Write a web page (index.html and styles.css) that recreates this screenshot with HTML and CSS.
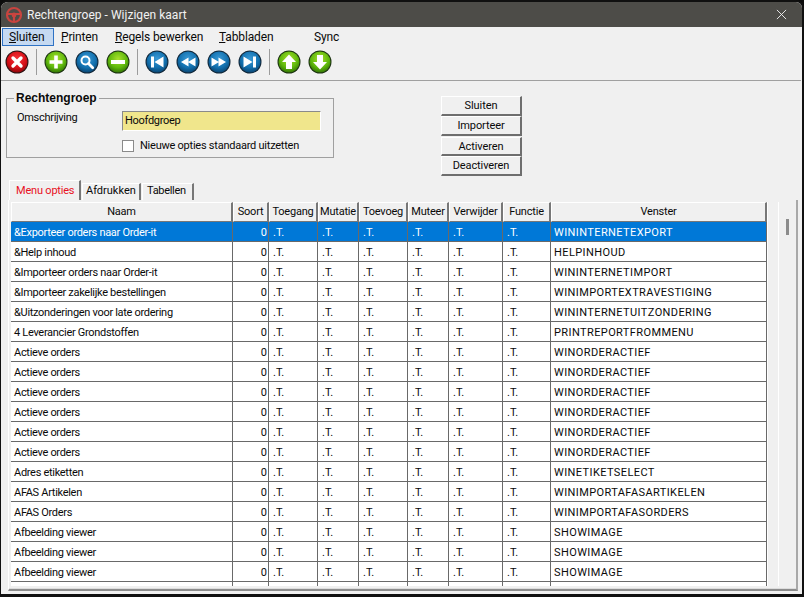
FILE: index.html
```html
<!DOCTYPE html>
<html lang="nl">
<head>
<meta charset="utf-8">
<title>Rechtengroep - Wijzigen kaart</title>
<link rel="stylesheet" href="styles.css">
</head>
<body>
<svg class="defs" aria-hidden="true">
  <defs>
    <radialGradient id="gRed" cx="50%" cy="35%" r="70%"><stop offset="0" stop-color="#f4343a"/><stop offset=".6" stop-color="#d80f17"/><stop offset="1" stop-color="#7c0508"/></radialGradient>
    <radialGradient id="gGreen" cx="50%" cy="35%" r="70%"><stop offset="0" stop-color="#a8e02c"/><stop offset=".6" stop-color="#5fb80c"/><stop offset="1" stop-color="#2c6a04"/></radialGradient>
    <radialGradient id="gBlue" cx="50%" cy="35%" r="70%"><stop offset="0" stop-color="#3a9ad6"/><stop offset=".6" stop-color="#1270ae"/><stop offset="1" stop-color="#0a3f68"/></radialGradient>
    <symbol id="disc-red" viewBox="0 0 24 24"><circle cx="12" cy="12" r="11.5" fill="#2a1414"/><circle cx="12" cy="12" r="10.5" fill="url(#gRed)"/></symbol>
    <symbol id="disc-green" viewBox="0 0 24 24"><circle cx="12" cy="12" r="11.5" fill="#1d3312"/><circle cx="12" cy="12" r="10.5" fill="url(#gGreen)"/></symbol>
    <symbol id="disc-blue" viewBox="0 0 24 24"><circle cx="12" cy="12" r="11.5" fill="#12283a"/><circle cx="12" cy="12" r="10.5" fill="url(#gBlue)"/></symbol>
  </defs>
</svg>
<div class="window">
  <header class="titlebar">
    <svg class="logo" viewBox="0 0 18 18"><circle cx="9" cy="9" r="7" fill="none" stroke="#c8443f" stroke-width="2.2"/><path d="M2.500 8h13M9 8v8" stroke="#c8443f" stroke-width="2.200" fill="none"/><circle cx="9" cy="9" r="2.400" fill="#c8443f"/></svg>
    <span class="title">Rechtengroep - Wijzigen kaart</span>
    <svg class="close" viewBox="0 0 12 12"><path d="M1 1l10 10M11 1L1 11" stroke="#f2f2f2" stroke-width="1" fill="none"/></svg>
  </header>
  <nav class="menubar">
    <span class="menu-item active"><u>S</u>luiten</span>
    <span class="menu-item printen"><u>P</u>rinten</span>
    <span class="menu-item regels"><u>R</u>egels bewerken</span>
    <span class="menu-item tabs-menu"><u>T</u>abbladen</span>
    <span class="menu-item">Sync</span>
  </nav>
  <div class="toolbar">
    <svg class="tool" viewBox="0 0 24 24"><use href="#disc-red"/><path d="M8 8l8 8M16 8l-8 8" stroke="#fff" stroke-width="3.400" stroke-linecap="round"/></svg>
    <i class="sep"></i>
    <svg class="tool" viewBox="0 0 24 24"><use href="#disc-green"/><path d="M12 5.500v13M5.500 12h13" stroke="#fff" stroke-width="3.600"/></svg>
    <svg class="tool" viewBox="0 0 24 24"><use href="#disc-blue"/><circle cx="10.500" cy="10.500" r="4" fill="none" stroke="#fff" stroke-width="2"/><path d="M13.500 13.500l4.200 4.200" stroke="#fff" stroke-width="2.800" stroke-linecap="round"/></svg>
    <svg class="tool" viewBox="0 0 24 24"><use href="#disc-green"/><path d="M5 12h14" stroke="#fff" stroke-width="3.800"/></svg>
    <i class="sep"></i>
    <svg class="tool" viewBox="0 0 24 24"><use href="#disc-blue"/><path d="M6 6.500h3v11H6zM18.500 6.500v11L9.500 12z" fill="#fff"/></svg>
    <svg class="tool" viewBox="0 0 24 24"><use href="#disc-blue"/><path d="M12.500 7.500v9L5 12zM19.500 7.500v9L12 12z" fill="#fff"/></svg>
    <svg class="tool" viewBox="0 0 24 24"><use href="#disc-blue"/><path d="M4.500 7.500v9L12 12zM11.500 7.500v9L19 12z" fill="#fff"/></svg>
    <svg class="tool" viewBox="0 0 24 24"><use href="#disc-blue"/><path d="M18 6.500h-3v11h3zM5.500 6.500v11l9-5.500z" fill="#fff"/></svg>
    <i class="sep"></i>
    <svg class="tool" viewBox="0 0 24 24"><use href="#disc-green"/><path d="M12 4.500l7 7.500H15v7H9v-7H5z" fill="#fff"/></svg>
    <svg class="tool" viewBox="0 0 24 24"><use href="#disc-green"/><path d="M12 19.500L19 12H15V5H9v7H5z" fill="#fff"/></svg>
  </div>
  <main class="content">
    <section class="top">
      <fieldset class="group">
        <legend>Rechtengroep</legend>
        <div class="field">
          <label class="field-label">Omschrijving</label>
          <div class="input">Hoofdgroep</div>
        </div>
        <div class="check-row">
          <span class="checkbox"></span>
          <span class="check-label">Nieuwe opties standaard uitzetten</span>
        </div>
      </fieldset>
      <div class="buttons">
        <button class="btn">Sluiten</button>
        <button class="btn">Importeer</button>
        <button class="btn">Activeren</button>
        <button class="btn">Deactiveren</button>
      </div>
    </section>
    <div class="tabs">
      <span class="tab selected">Menu opties</span>
      <span class="tab t-afdrukken">Afdrukken</span>
      <span class="tab t-tabellen">Tabellen</span>
    </div>
    <section class="panel">
      <div class="grid-wrap">
        <table class="grid">
          <colgroup>
            <col class="c-naam"><col class="c-soort"><col class="c-toegang"><col class="c-mutatie"><col class="c-toevoeg"><col class="c-muteer"><col class="c-verwijder"><col class="c-functie"><col class="c-venster">
          </colgroup>
          <thead>
            <tr><th>Naam</th><th>Soort</th><th>Toegang</th><th>Mutatie</th><th>Toevoeg</th><th>Muteer</th><th>Verwijder</th><th>Functie</th><th>Venster</th></tr>
          </thead>
          <tbody>
            <tr class="current"><td>&amp;Exporteer orders naar Order-it</td><td class="num">0</td><td>.T.</td><td>.T.</td><td>.T.</td><td>.T.</td><td>.T.</td><td>.T.</td><td>WININTERNETEXPORT</td></tr>
            <tr><td>&amp;Help inhoud</td><td class="num">0</td><td>.T.</td><td>.T.</td><td>.T.</td><td>.T.</td><td>.T.</td><td>.T.</td><td>HELPINHOUD</td></tr>
            <tr><td>&amp;Importeer orders naar Order-it</td><td class="num">0</td><td>.T.</td><td>.T.</td><td>.T.</td><td>.T.</td><td>.T.</td><td>.T.</td><td>WININTERNETIMPORT</td></tr>
            <tr><td>&amp;Importeer zakelijke bestellingen</td><td class="num">0</td><td>.T.</td><td>.T.</td><td>.T.</td><td>.T.</td><td>.T.</td><td>.T.</td><td>WINIMPORTEXTRAVESTIGING</td></tr>
            <tr><td>&amp;Uitzonderingen voor late ordering</td><td class="num">0</td><td>.T.</td><td>.T.</td><td>.T.</td><td>.T.</td><td>.T.</td><td>.T.</td><td>WININTERNETUITZONDERING</td></tr>
            <tr><td>4 Leverancier Grondstoffen</td><td class="num">0</td><td>.T.</td><td>.T.</td><td>.T.</td><td>.T.</td><td>.T.</td><td>.T.</td><td>PRINTREPORTFROMMENU</td></tr>
            <tr><td>Actieve orders</td><td class="num">0</td><td>.T.</td><td>.T.</td><td>.T.</td><td>.T.</td><td>.T.</td><td>.T.</td><td>WINORDERACTIEF</td></tr>
            <tr><td>Actieve orders</td><td class="num">0</td><td>.T.</td><td>.T.</td><td>.T.</td><td>.T.</td><td>.T.</td><td>.T.</td><td>WINORDERACTIEF</td></tr>
            <tr><td>Actieve orders</td><td class="num">0</td><td>.T.</td><td>.T.</td><td>.T.</td><td>.T.</td><td>.T.</td><td>.T.</td><td>WINORDERACTIEF</td></tr>
            <tr><td>Actieve orders</td><td class="num">0</td><td>.T.</td><td>.T.</td><td>.T.</td><td>.T.</td><td>.T.</td><td>.T.</td><td>WINORDERACTIEF</td></tr>
            <tr><td>Actieve orders</td><td class="num">0</td><td>.T.</td><td>.T.</td><td>.T.</td><td>.T.</td><td>.T.</td><td>.T.</td><td>WINORDERACTIEF</td></tr>
            <tr><td>Actieve orders</td><td class="num">0</td><td>.T.</td><td>.T.</td><td>.T.</td><td>.T.</td><td>.T.</td><td>.T.</td><td>WINORDERACTIEF</td></tr>
            <tr><td>Adres etiketten</td><td class="num">0</td><td>.T.</td><td>.T.</td><td>.T.</td><td>.T.</td><td>.T.</td><td>.T.</td><td>WINETIKETSELECT</td></tr>
            <tr><td>AFAS Artikelen</td><td class="num">0</td><td>.T.</td><td>.T.</td><td>.T.</td><td>.T.</td><td>.T.</td><td>.T.</td><td>WINIMPORTAFASARTIKELEN</td></tr>
            <tr><td>AFAS Orders</td><td class="num">0</td><td>.T.</td><td>.T.</td><td>.T.</td><td>.T.</td><td>.T.</td><td>.T.</td><td>WINIMPORTAFASORDERS</td></tr>
            <tr><td>Afbeelding viewer</td><td class="num">0</td><td>.T.</td><td>.T.</td><td>.T.</td><td>.T.</td><td>.T.</td><td>.T.</td><td>SHOWIMAGE</td></tr>
            <tr><td>Afbeelding viewer</td><td class="num">0</td><td>.T.</td><td>.T.</td><td>.T.</td><td>.T.</td><td>.T.</td><td>.T.</td><td>SHOWIMAGE</td></tr>
            <tr><td>Afbeelding viewer</td><td class="num">0</td><td>.T.</td><td>.T.</td><td>.T.</td><td>.T.</td><td>.T.</td><td>.T.</td><td>SHOWIMAGE</td></tr>
            <tr><td></td><td></td><td></td><td></td><td></td><td></td><td></td><td></td><td></td></tr>
          </tbody>
        </table>
        <div class="scroll"><div class="thumb"></div></div>
      </div>
    </section>
  </main>
</div>
</body>
</html>
```
FILE: styles.css
```css
* { box-sizing: border-box; }
html, body { margin: 0; height: 597px; background: #0b0b0b; overflow: hidden; }
body { font-family: Roboto, "Liberation Sans", Arial, sans-serif; font-size: 11px; color: #0a0a0a; }
.defs { width: 0; height: 0; position: absolute; }
.window { width: 804px; height: 597px; display: flex; flex-direction: column; background: #f0f0f0; border: 1px solid #101010; border-top-width: 2px; border-radius: 8px 8px 0 0; border-bottom-width: 3px; border-right-width: 2px; overflow: hidden; }
.titlebar { height: 25px; flex: none; background: #4d4c48; display: flex; align-items: center; padding: 0 15px 0 4px; color: #f2f2f2; font-size: 12px; }
.logo { width: 18px; height: 18px; flex: none; }
.title { margin-left: 4px; letter-spacing: 0.03px; }
.close { width: 11px; height: 11px; margin-left: auto; }
.menubar { height: 20px; flex: none; display: flex; align-items: center; font-size: 12px; padding-left: 1px; white-space: nowrap; }
.menu-item { padding: 0 7px; letter-spacing: -0.15px; }
.menu-item.active { height: 18px; line-height: 16px; width: 52px; background: #c5d9f1; border: 1px solid #2f72c4; padding: 0 6px; }
.printen { width: 54px; }
.regels { width: 104px; padding-left: 7px; }
.tabs-menu { width: 95px; }
.toolbar { height: 34px; flex: none; display: flex; align-items: center; gap: 7px; padding: 0 0 3px 4px; border-bottom: 1px solid #a0a0a0; margin-right: 1px; }
.tool { width: 24px; height: 24px; flex: none; }
.sep { width: 1px; height: 26px; background: #9c9c9c; flex: none; }
.content { flex: 1; min-height: 0; display: flex; flex-direction: column; padding: 0 4px 3px 7px; }
.top { display: flex; height: 99px; flex: none; padding-top: 13px; align-items: flex-start; }
.group { width: 328px; height: 64px; margin: 0 0 0 -2px; padding: 0; border: 1px solid #a0a0a0; letter-spacing: -0.3px; }
.group legend { font: bold 12px "Liberation Sans", Arial, sans-serif; letter-spacing: 0; padding: 0 2px; margin-left: 7px; line-height: 9px; }
.field { display: flex; margin-top: 8px; }
.field-label { margin-left: 10px; width: 105px; }
.input { width: 199px; height: 20px; background: #f0e68c; border: 1px solid #8a8a8a; border-right-color: #fff; border-bottom-color: #fff; padding-left: 2px; line-height: 18px; }
.check-row { display: flex; align-items: center; gap: 6px; margin: 8px 0 0 115px; }
.check-label { letter-spacing: -0.24px; }
.checkbox { width: 12px; height: 12px; background: #fff; border: 1px solid #8a8a8a; }
.buttons { margin-left: 107px; margin-top: 2px; display: flex; flex-direction: column; }
.btn { width: 81px; height: 20px; padding: 0; background: #f0f0f0; border: 1px solid #fff; border-right: 2px solid #6e6e6e; border-bottom: 2px solid #6e6e6e; font: 11px Roboto, "Liberation Sans", Arial, sans-serif; letter-spacing: -0.1px; color: #0a0a0a; }
.btn:nth-child(3) { height: 19px; margin-top: 1px; }
.tabs { height: 20px; flex: none; display: flex; align-items: flex-end; padding-left: 1px; }
.tab { height: 17px; line-height: 14px; padding: 0 0 0 3px; border: 1px solid #fff; border-right: 2px solid #777; border-bottom: 0; margin-right: 1px; }
.tab.selected { width: 72px; height: 20px; line-height: 19px; color: #e81123; padding-left: 6px; letter-spacing: -0.2px; }
.t-afdrukken { width: 59px; }
.tab.t-tabellen { width: 52px; padding-left: 4px; letter-spacing: -0.3px; }
.panel { flex: 1; min-height: 0; border: 1px solid #fff; border-top: 0; border-right: 2px solid #a8a8a8; border-bottom: 2px solid #8c8c8c; box-shadow: inset 0 -1px 0 #dcdcdc; padding: 2px 0 3px 2px; }
.grid-wrap { display: flex; height: 100%; overflow: hidden; }
.grid { table-layout: fixed; width: 756px; border-collapse: separate; border-spacing: 0; flex: none; align-self: flex-start; background: #fff; }
.c-naam { width: 222px; } .c-soort { width: 36px; } .c-toegang { width: 49px; } .c-mutatie { width: 41px; } .c-toevoeg { width: 49px; } .c-muteer { width: 41px; } .c-verwijder { width: 54px; } .c-functie { width: 48px; } .c-venster { width: 216px; }
th { height: 20px; font-weight: normal; padding: 0 0 2px; letter-spacing: -0.2px; background: #f0f0f0; border-top: 1px solid #fff; border-left: 1px solid #fff; border-right: 2px solid #777; border-bottom: 1px solid #777; white-space: nowrap; overflow: hidden; }
td { height: 20px; padding: 1px 0 0 4px; border-right: 1px solid #696969; border-bottom: 1px solid #696969; white-space: nowrap; overflow: hidden; }
td:first-child { padding-left: 3px; letter-spacing: -0.3px; }
td:last-child { padding-left: 3px; letter-spacing: 0.4px; }
td.num { text-align: right; padding-right: 1px; }
tr.current td { background: #0078d7; color: #fff; }
.scroll { flex: 1; border-left: 1px solid #fff; position: relative; background: linear-gradient(90deg, #f0f0f0 0 10px, #fff 10px 11px, #f0f0f0 11px); }
.thumb { position: absolute; left: 18px; top: 17px; width: 3px; height: 16px; background: #8c8c8c; }
```
